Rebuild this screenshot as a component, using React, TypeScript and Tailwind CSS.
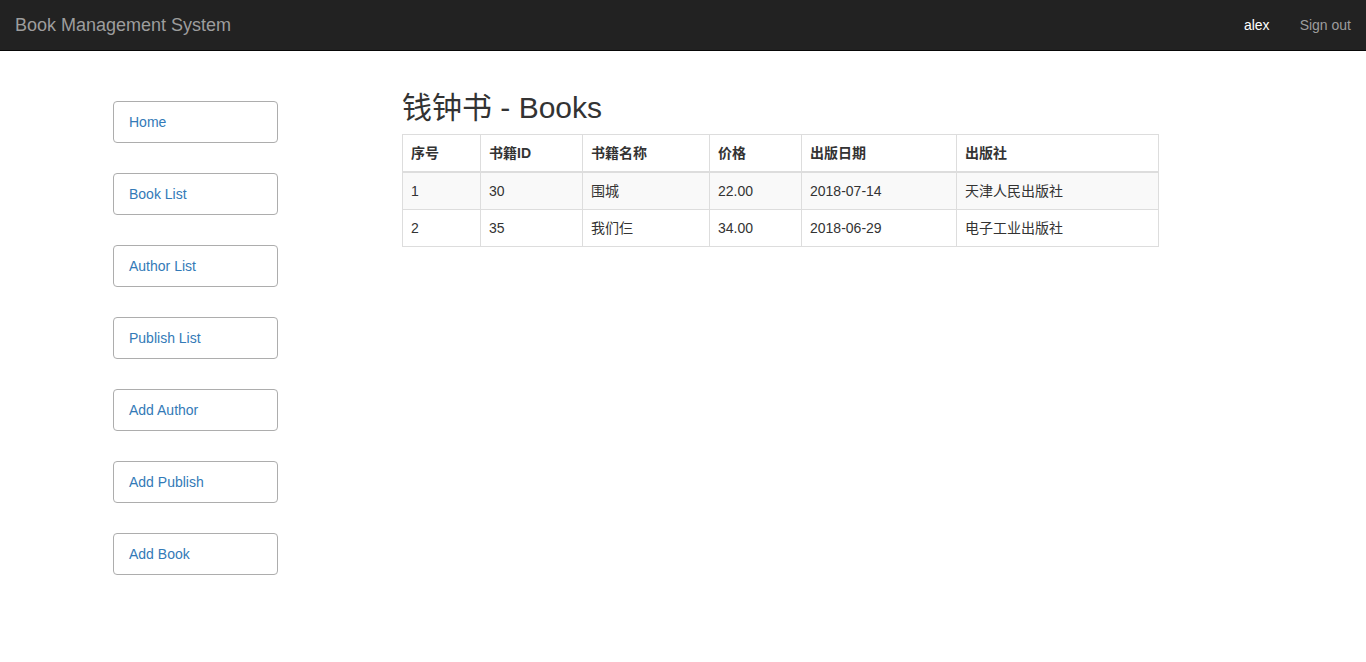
const links = ["Home", "Book List", "Author List", "Publish List", "Add Author", "Add Publish", "Add Book"];

const books = [
  { id: "30", name: "围城", price: "22.00", date: "2018-07-14", pub: "天津人民出版社" },
  { id: "35", name: "我们仨", price: "34.00", date: "2018-06-29", pub: "电子工业出版社" },
];

export default function App() {
  return (
    <div className="min-h-[662px] bg-white text-[14px] text-[#333] font-['Liberation_Sans','Noto_Sans_CJK_SC',sans-serif]">
      <nav className="h-[51px] bg-[#222] border-b border-[#080808] flex items-center justify-between px-[15px]">
        <a href="#" className="text-[18px] text-[#9d9d9d] leading-[20px]">Book Management System</a>
        <div className="flex items-center">
          <a href="#" className="text-white px-[15px] leading-[20px]">alex</a>
          <a href="#" className="text-[#9d9d9d] pl-[15px] leading-[20px]">Sign out</a>
        </div>
      </nav>

      <div className="flex pl-[113px]">
        <aside className="w-[165px] pt-[50px] flex flex-col gap-[30px]">
          {links.map((l) => (
            <a
              key={l}
              href="#"
              className="h-[42px] flex items-center pl-[15px] border border-[#adadad] rounded-[4px] text-[#337ab7]"
            >
              {l}
            </a>
          ))}
        </aside>

        <main className="ml-[124px] pt-[40px] w-[757px]">
          <h2 className="text-[30px] leading-[33px] font-normal mb-[10px]">钱钟书 - Books</h2>
          <table className="w-full border-collapse border border-[#ddd]">
            <thead>
              <tr className="text-left">
                <th className="w-[78px] border border-[#ddd] border-b-2 p-[8px] leading-[20px] font-bold">序号</th>
                <th className="w-[102px] border border-[#ddd] border-b-2 p-[8px] leading-[20px] font-bold">书籍ID</th>
                <th className="w-[127px] border border-[#ddd] border-b-2 p-[8px] leading-[20px] font-bold">书籍名称</th>
                <th className="w-[92px] border border-[#ddd] border-b-2 p-[8px] leading-[20px] font-bold">价格</th>
                <th className="w-[155px] border border-[#ddd] border-b-2 p-[8px] leading-[20px] font-bold">出版日期</th>
                <th className="border border-[#ddd] border-b-2 p-[8px] leading-[20px] font-bold">出版社</th>
              </tr>
            </thead>
            <tbody>
              {books.map((b, i) => (
                <tr key={b.id} className={i % 2 === 0 ? "bg-[#f9f9f9]" : "bg-white"}>
                  <td className="border border-[#ddd] p-[8px] leading-[20px]">{i + 1}</td>
                  <td className="border border-[#ddd] p-[8px] leading-[20px]">{b.id}</td>
                  <td className="border border-[#ddd] p-[8px] leading-[20px]">{b.name}</td>
                  <td className="border border-[#ddd] p-[8px] leading-[20px]">{b.price}</td>
                  <td className="border border-[#ddd] p-[8px] leading-[20px]">{b.date}</td>
                  <td className="border border-[#ddd] p-[8px] leading-[20px]">{b.pub}</td>
                </tr>
              ))}
            </tbody>
          </table>
        </main>
      </div>
    </div>
  );
}
